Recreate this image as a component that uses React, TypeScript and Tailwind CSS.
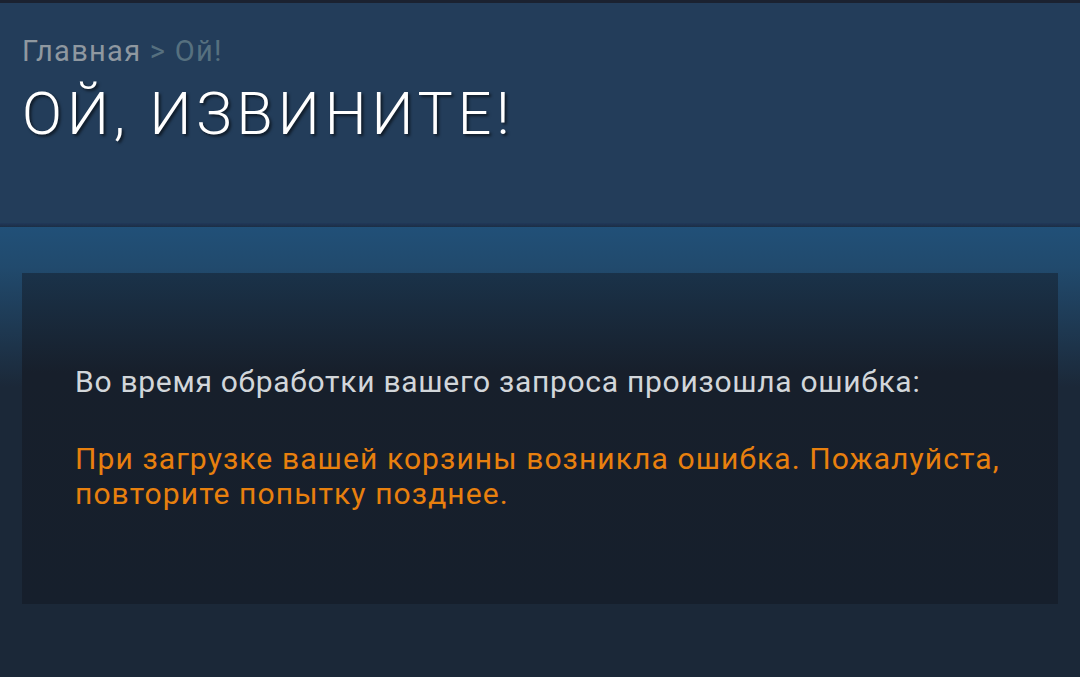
export default function App() {
  return (
    <div className="min-h-screen bg-[#1b2838] font-['Roboto',sans-serif]">
      {/* top strip */}
      <div className="h-[3px] bg-[#1b2230]" />

      {/* Page header */}
      <div className="h-[220px] bg-[#233d5a] px-[22px] pt-[31px]">
        <div className="text-[29px] leading-[34px] tracking-[1.3px] text-[#8f98a0]">
          Главная <span className="text-[#56707f]">&gt; Ой!</span>
        </div>
        <h1 className="mt-[15px] text-[59px] leading-[62px] font-light uppercase tracking-[5px] text-white [text-shadow:2px_2px_3px_rgba(0,0,0,0.6)]">
          Ой, извините!
        </h1>
      </div>
      <div className="h-[4px] bg-gradient-to-b from-[#21385a] to-[#1c2e45]" />

      {/* Content */}
      <div className="bg-[linear-gradient(to_bottom,#215078_0px,#214a6d_40px,#1b2838_160px)] px-[22px] pt-[46px] pb-[73px]">
        <div className="bg-[linear-gradient(to_bottom,#1a3249_0px,#171f2b_100px,#161f2c_100%)] pl-[53px] pr-[40px] pt-[91px] pb-[93px]">
          <p className="text-[30px] leading-[35px] tracking-[0.72px] text-[#d2d6da]">
            Во время обработки вашего запроса произошла ошибка:
          </p>
          <p className="mt-[42px] text-[30px] leading-[35px] tracking-[1.1px] text-[#e8800e]">
            При загрузке вашей корзины возникла ошибка. Пожалуйста, повторите попытку позднее.
          </p>
        </div>
      </div>
    </div>
  )
}
